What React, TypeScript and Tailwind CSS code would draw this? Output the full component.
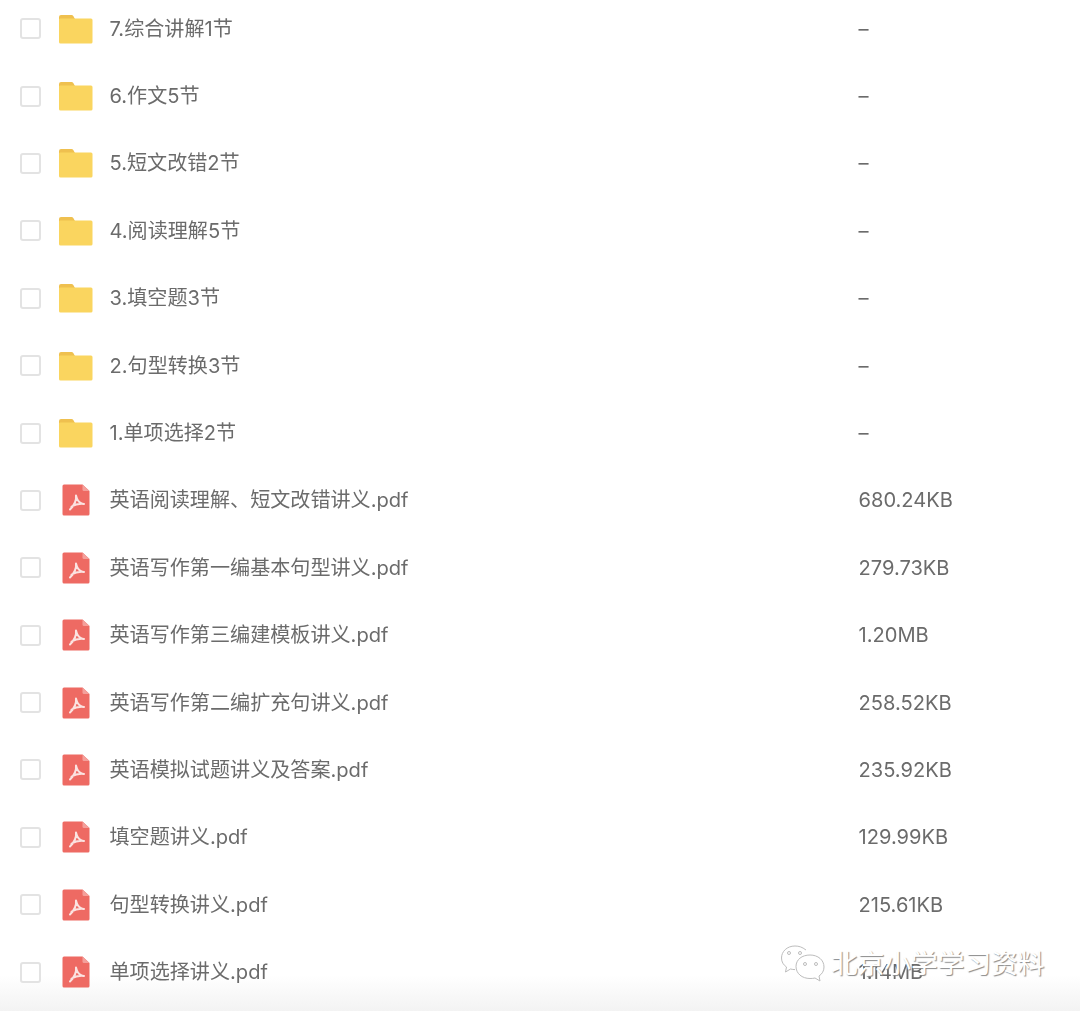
const rows = [
  { name: '7.综合讲解1节', size: '–', type: 'folder' },
  { name: '6.作文5节', size: '–', type: 'folder' },
  { name: '5.短文改错2节', size: '–', type: 'folder' },
  { name: '4.阅读理解5节', size: '–', type: 'folder' },
  { name: '3.填空题3节', size: '–', type: 'folder' },
  { name: '2.句型转换3节', size: '–', type: 'folder' },
  { name: '1.单项选择2节', size: '–', type: 'folder' },
  { name: '英语阅读理解、短文改错讲义.pdf', size: '680.24KB', type: 'pdf' },
  { name: '英语写作第一编基本句型讲义.pdf', size: '279.73KB', type: 'pdf' },
  { name: '英语写作第三编建模板讲义.pdf', size: '1.20MB', type: 'pdf' },
  { name: '英语写作第二编扩充句讲义.pdf', size: '258.52KB', type: 'pdf' },
  { name: '英语模拟试题讲义及答案.pdf', size: '235.92KB', type: 'pdf' },
  { name: '填空题讲义.pdf', size: '129.99KB', type: 'pdf' },
  { name: '句型转换讲义.pdf', size: '215.61KB', type: 'pdf' },
  { name: '单项选择讲义.pdf', size: '1.14MB', type: 'pdf' },
]

function FolderIcon() {
  return (
    <svg width="36" height="30" viewBox="0 0 36 30" className="block">
      <path d="M1 3a2 2 0 0 1 2-2h10.500a2 2 0 0 1 1.800 1.100L17 5v4H1z" fill="#efc04f" />
      <path d="M1 8V6.500A1.500 1.500 0 0 1 2.500 4.500H33A1.500 1.500 0 0 1 34.500 6V28a1.500 1.500 0 0 1-1.500 1.500H2.500A1.500 1.500 0 0 1 1 28z" fill="#fad55f" />
    </svg>
  )
}

function PdfIcon() {
  return (
    <svg width="30" height="34" viewBox="0 0 30 34" className="block">
      <path d="M3 1.500h18.500l7 6.500v23a1.500 1.500 0 0 1-1.500 1.500H3A1.500 1.500 0 0 1 1.500 31V3A1.500 1.500 0 0 1 3 1.500z" fill="#ee6a63" />
      <path d="M21.500 1.500v5a1.500 1.500 0 0 0 1.500 1.500h5.500z" fill="#f4a09b" />
      <path d="M15 12.500c.5 4-1.500 9.500-6 14M15 12.500c.8 3.500 2.800 6.500 5 7.700 1 .6 2 .8 3 .8M10.500 23.500c3.500-2 8-3 12.500-2.500" fill="none" stroke="#fbe3e1" strokeWidth="2" strokeLinecap="round" />
    </svg>
  )
}

export default function App() {
  return (
    <div className="relative h-[1011px] w-[1080px] overflow-hidden bg-white font-['Inter','Noto_Sans_CJK_SC',sans-serif] text-[20.100px] text-[#6b6b6b]">
      {/* bottom fade, sits under the rows */}
      <div className="absolute inset-x-0 bottom-0 h-[36px] bg-gradient-to-b from-white to-[#f3f3f3]" />

      <div className="relative -mt-[5px] blur-[0.3px]">
        {rows.map((row) => (
          <div key={row.name} className="flex h-[67.400px] items-center">
            <div className="ml-[20px] h-[21px] w-[21px] rounded-[3px] border-2 border-[#e3e3e3] bg-white" />
            <div className="ml-[17px] flex w-[36px] justify-center">
              {row.type === 'folder' ? <FolderIcon /> : <PdfIcon />}
            </div>
            <div className="ml-[15.500px] w-[749px] whitespace-nowrap">{row.name}</div>
            <div className="whitespace-nowrap">{row.size}</div>
          </div>
        ))}
      </div>

      {/* watermark */}
      <div className="absolute left-[780px] top-[943px] flex items-center">
        <svg width="46" height="40" viewBox="0 0 46 40" fill="none" stroke="#bdbdbd" strokeWidth="1">
          <path d="M26 7C22 4 19 3 15 3 7 3 1.500 8.500 1.500 15c0 4 2 7 5 9l-1 5 5-3c1.500.4 3 .6 4.500.6" fill="#fff" />
          <path d="M30 12c8 0 14 5 14 12 0 4-2 7-5 9l1 5-5-3c-1.500.4-3 .5-5 .5-8 0-14-5-14-12s6-11.500 14-11.500z" fill="#fff" fillOpacity="0.95" />
          <circle cx="9" cy="10" r="1.500" />
          <circle cx="20" cy="10" r="1.500" />
          <circle cx="25" cy="21" r="1.500" />
          <circle cx="36" cy="21" r="1.500" />
        </svg>
        <span className="ml-[5px] text-[26.700px] text-white [text-shadow:1px_1px_1px_#8a8a8a]">北京小学学习资料</span>
      </div>
    </div>
  )
}
